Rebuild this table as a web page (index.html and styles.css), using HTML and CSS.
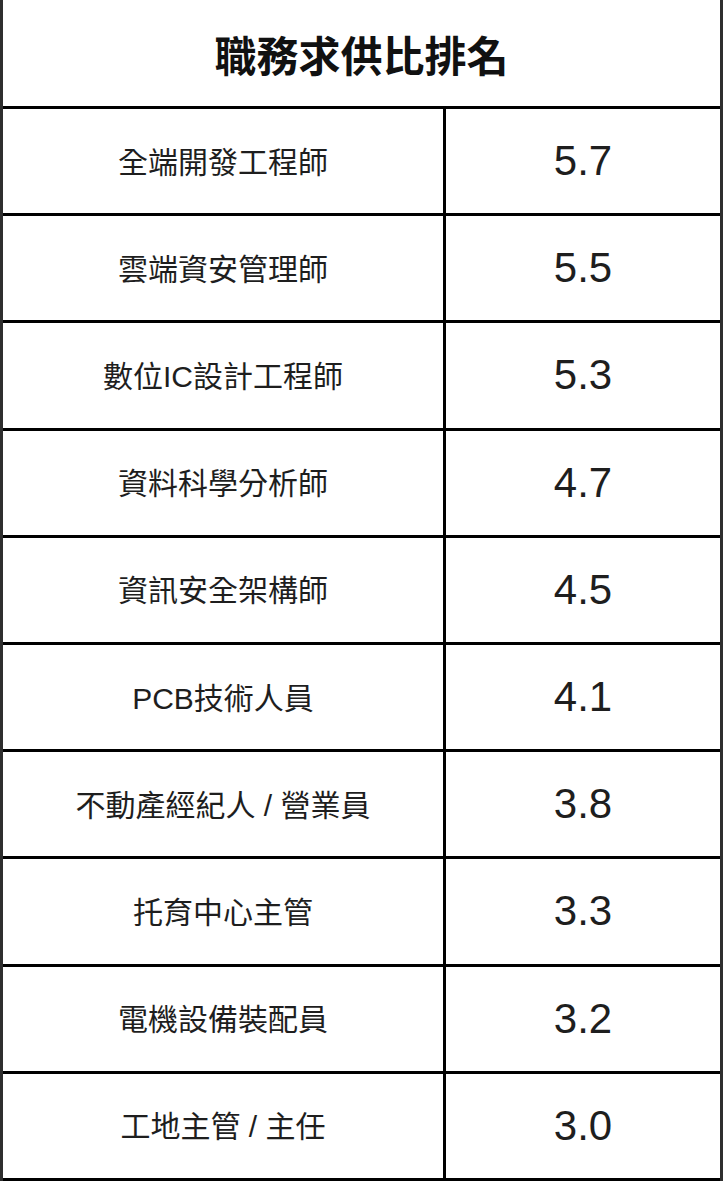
FILE: index.html
```html
<!DOCTYPE html>
<html lang="zh-Hant">
<head>
<meta charset="utf-8">
<title>職務求供比排名</title>
<link rel="stylesheet" href="styles.css">
</head>
<body>
<div class="board">
  <div class="head">職務求供比排名</div>
  <div class="row"><div class="job">全端開發工程師</div><div class="val">5.7</div></div>
  <div class="row"><div class="job">雲端資安管理師</div><div class="val">5.5</div></div>
  <div class="row"><div class="job">數位IC設計工程師</div><div class="val">5.3</div></div>
  <div class="row"><div class="job">資料科學分析師</div><div class="val">4.7</div></div>
  <div class="row"><div class="job">資訊安全架構師</div><div class="val">4.5</div></div>
  <div class="row"><div class="job">PCB技術人員</div><div class="val">4.1</div></div>
  <div class="row"><div class="job">不動產經紀人 / 營業員</div><div class="val">3.8</div></div>
  <div class="row"><div class="job">托育中心主管</div><div class="val">3.3</div></div>
  <div class="row"><div class="job">電機設備裝配員</div><div class="val">3.2</div></div>
  <div class="row"><div class="job">工地主管 / 主任</div><div class="val">3.0</div></div>
</div>
</body>
</html>
```
FILE: styles.css
```css
html, body {
  margin: 0;
  padding: 0;
  background: #ffffff;
}
.board {
  width: 723px;
  box-sizing: border-box;
  border-left: 3px solid #2e2e2e;
  border-right: 3px solid #2e2e2e;
  font-family: "Liberation Sans", "Noto Sans CJK TC", sans-serif;
  color: #1e1e1e;
}
.head {
  height: 106px;
  border-bottom: 3px solid #000;
  display: flex;
  align-items: center;
  justify-content: center;
  font-size: 42px;
  font-weight: 700;
  color: #111;
}
.row {
  display: flex;
  height: 104.2px;
  border-bottom: 3px solid #000;
}
.job {
  width: 443px;
  box-sizing: border-box;
  border-right: 3px solid #000;
  display: flex;
  align-items: center;
  justify-content: center;
  font-size: 30px;
  padding-bottom: 3px;
}
.val {
  flex: 1;
  display: flex;
  align-items: center;
  justify-content: center;
  font-size: 42px;
}
```
